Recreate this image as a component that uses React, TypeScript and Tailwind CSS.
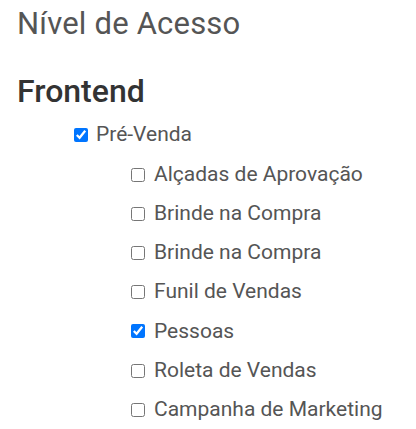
import { useState } from "react";

const SUB_ITEMS = [
  { label: "Alçadas de Aprovação", checked: false },
  { label: "Brinde na Compra", checked: false },
  { label: "Brinde na Compra", checked: false },
  { label: "Funil de Vendas", checked: false },
  { label: "Pessoas", checked: true },
  { label: "Roleta de Vendas", checked: false },
  { label: "Campanha de Marketing", checked: false },
];

const App = () => {
  const [parentChecked, setParentChecked] = useState(true);
  const [items, setItems] = useState(SUB_ITEMS.map((i) => i.checked));

  const toggle = (idx: number) => {
    setItems((prev) => prev.map((v, i) => (i === idx ? !v : v)));
  };

  return (
    <main className="w-[416px] h-[429px] bg-white pl-[17px] pt-[6px]" style={{ fontFamily: "Roboto, sans-serif" }}>
      <h2 className="text-[31px] leading-[36px] font-normal text-[#555] tracking-[0.2px]">Nível de Acesso</h2>
      <h3 className="mt-[31px] text-[32px] leading-[36px] font-medium text-[#333]">Frontend</h3>
      <div className="mt-[9px] pl-[57px]">
        <label className="flex items-center h-[34px] gap-[8px] text-[21px] text-[#555]">
          <input
            type="checkbox"
            className="m-0 w-[14px] h-[14px]"
            checked={parentChecked}
            onChange={() => setParentChecked(!parentChecked)}
          />
          Pré-Venda
        </label>
        <ul className="pl-[57px] mt-[3px]">
          {SUB_ITEMS.map((item, idx) => (
            <li key={idx}>
              <label className="flex items-center h-[39.2px] gap-[9px] text-[21px] text-[#555]">
                <input
                  type="checkbox"
                  className="m-0 w-[14px] h-[14px]"
                  checked={items[idx]}
                  onChange={() => toggle(idx)}
                />
                {item.label}
              </label>
            </li>
          ))}
        </ul>
      </div>
    </main>
  );
};

export default App;
